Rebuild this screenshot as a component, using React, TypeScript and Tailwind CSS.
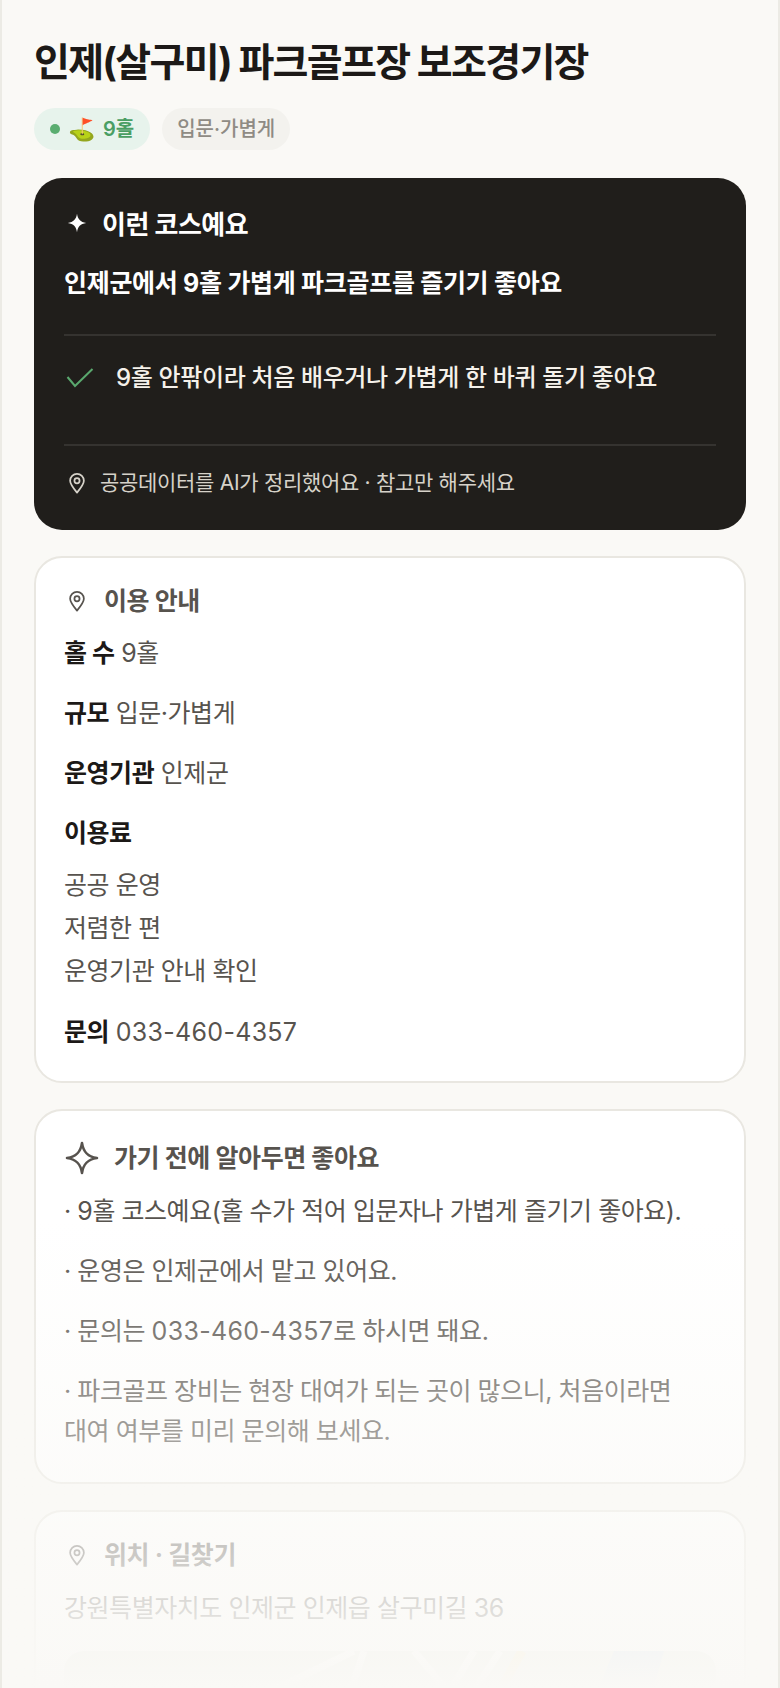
const FONT = "font-['Inter','Noto_Sans_CJK_KR',sans-serif]";

function Pin() {
  return (
    <svg className="ml-[2px] shrink-0" width={22} height={22} viewBox="0 0 24 24" fill="none" stroke="currentColor" strokeWidth="1.9">
      <path d="M12 22.500c-4.500-5.500-7.500-9.500-7.500-13a7.500 7.500 0 0 1 15 0c0 3.500-3 7.500-7.500 13z" strokeLinejoin="round" />
      <circle cx="12" cy="9.500" r="2.800" />
    </svg>
  );
}

function Sparkle({ size, filled, className }: { size: number; filled?: boolean; className?: string }) {
  return (
    <svg className={className} width={size} height={size} viewBox="0 0 24 24" fill={filled ? "currentColor" : "none"} stroke="currentColor" strokeWidth={filled ? 0 : 1.7} strokeLinejoin="round">
      <path d="M12 2c.9 6 3.700 9.100 10 10-6.300.9-9.100 4-10 10-.9-6-3.700-9.100-10-10 6.300-.9 9.100-4 10-10z" />
    </svg>
  );
}

function Phone() {
  return <span className="tracking-[0.3px]">033-460-4357</span>;
}

function Row({ label, children }: { label: string; children?: React.ReactNode }) {
  return (
    <p className="text-[25px] leading-[40px] tracking-[-0.45px] text-[#57534e]">
      <b className="font-bold text-[#1c1917]">{label}</b> {children}
    </p>
  );
}

export default function App() {
  return (
    <div className={`${FONT} relative h-[1688px] overflow-hidden border-x-2 border-[#ecebe5] bg-[#faf9f6] px-[32px] pt-[36px]`}>
      <h1 className="text-[39px] font-bold leading-[52px] tracking-[-1.7px] text-[#1c1917]">인제(살구미) 파크골프장 보조경기장</h1>

      <div className="mt-[20px] flex gap-[12px]">
        <span className="flex h-[42px] items-center gap-[8px] rounded-full bg-[#e7f3ec] px-[16px] text-[20px] font-semibold text-[#4a9e63]">
          <i className="h-[10px] w-[10px] rounded-full bg-[#5aad70]" />
          <span className="text-[22px]">⛳</span>
          <span>9홀</span>
        </span>
        <span className="flex h-[42px] items-center rounded-full bg-[#f3f2ee] px-[15px] text-[20px] font-medium text-[#8f8b84]">입문·가볍게</span>
      </div>

      <section className="mt-[28px] h-[352px] rounded-[28px] bg-[#201e1b] px-[30px] pt-[28px] text-white">
        <div className="flex items-center gap-[14px] text-[26px] font-bold leading-[38px] tracking-[-0.5px]">
          <Sparkle className="-mt-[4px] ml-[2px]" size={22} filled />
          이런 코스예요
        </div>
        <p className="mt-[20px] text-[25px] font-bold leading-[38px] tracking-[-0.3px]">인제군에서 9홀 가볍게 파크골프를 즐기기 좋아요</p>
        <div className="mt-[32px] border-t-2 border-[#353330] pt-[23px]">
          <div className="flex items-center gap-[20px] text-[24px] font-medium leading-[38px] tracking-[-0.36px] text-[#f5f1ea]">
            <svg width={32} height={24} viewBox="0 0 32 24" fill="none" stroke="#5aa86e" strokeWidth="2">
              <path d="M3.500 11 11 20 28.500 3" />
            </svg>
            9홀 안팎이라 처음 배우거나 가볍게 한 바퀴 돌기 좋아요
          </div>
        </div>
        <div className="mt-[47px] border-t-2 border-[#353330] pt-[21px]">
          <div className="flex items-center gap-[12px] text-[21px] leading-[32px] tracking-[-0.3px] text-[#d6d2c9]">
            <Pin />
            공공데이터를 AI가 정리했어요 · 참고만 해주세요
          </div>
        </div>
      </section>

      <section className="mt-[26px] rounded-[28px] border-2 border-[#e9e7e1] bg-white px-[28px] pb-[29px] pt-[24px]">
        <div className="flex items-center gap-[16px] text-[25px] font-bold leading-[38px] tracking-[-0.4px] text-[#57534e]">
          <Pin />
          이용 안내
        </div>
        <div className="mt-[13px] flex flex-col gap-[20px]">
          <Row label="홀 수">9홀</Row>
          <Row label="규모">입문·가볍게</Row>
          <Row label="운영기관">인제군</Row>
          <Row label="이용료" />
        </div>
        <div className="mt-[11px] text-[25px] leading-[43px] tracking-[-0.45px] text-[#57534e]">
          <p>공공 운영</p>
          <p>저렴한 편</p>
          <p>운영기관 안내 확인</p>
        </div>
        <div className="mt-[19px]"><Row label="문의"><Phone /></Row></div>
      </section>

      <section className="mt-[26px] rounded-[28px] border-2 border-[#e9e7e1] bg-white px-[28px] pb-[31px] pt-[28px]">
        <div className="flex items-center gap-[14px] text-[25px] font-bold leading-[38px] tracking-[-0.4px] text-[#57534e]">
          <Sparkle size={36} />
          가기 전에 알아두면 좋아요
        </div>
        <div className="mt-[14px] flex flex-col gap-[20px] text-[25px] leading-[40px] tracking-[-0.45px] text-[#57534e]">
          <p>· 9홀 코스예요(홀 수가 적어 입문자나 가볍게 즐기기 좋아요).</p>
          <p>· 운영은 인제군에서 맡고 있어요.</p>
          <p>· 문의는 <Phone />로 하시면 돼요.</p>
          <p>· 파크골프 장비는 현장 대여가 되는 곳이 많으니, 처음이라면<br />대여 여부를 미리 문의해 보세요.</p>
        </div>
      </section>

      <section className="mt-[26px] rounded-[28px] border-2 border-[#e9e7e1] bg-white px-[28px] pt-[24px]">
        <div className="flex items-center gap-[16px] text-[25px] font-bold leading-[38px] tracking-[-0.4px] text-[#57534e]">
          <Pin />
          위치 · 길찾기
        </div>
        <p className="mt-[14px] text-[25px] leading-[40px] tracking-[-0.45px] text-[#57534e]">강원특별자치도 인제군 인제읍 살구미길 36</p>
        <div className="mt-[23px] h-[200px] overflow-hidden rounded-[20px] bg-[#e2e6db]">
          <svg width="652" height="200" viewBox="0 0 652 200" fill="none">
            <path d="M140 58 L220 34 L290 0 M300 0 L280 60 M350 0 L400 60 M410 0 L380 50 M436 0 L410 40" stroke="#ffffff" strokeWidth="7" />
            <path d="M458 0 L436 40" stroke="#f5dfa0" strokeWidth="9" />
            <path d="M550 0 H600 L590 36 H535z" fill="#bcd0e8" />
          </svg>
        </div>
      </section>

      <div className="absolute inset-x-0 bottom-0 h-[468px] bg-gradient-to-b from-[#faf9f600] to-[#faf9f6]" />
    </div>
  );
}
